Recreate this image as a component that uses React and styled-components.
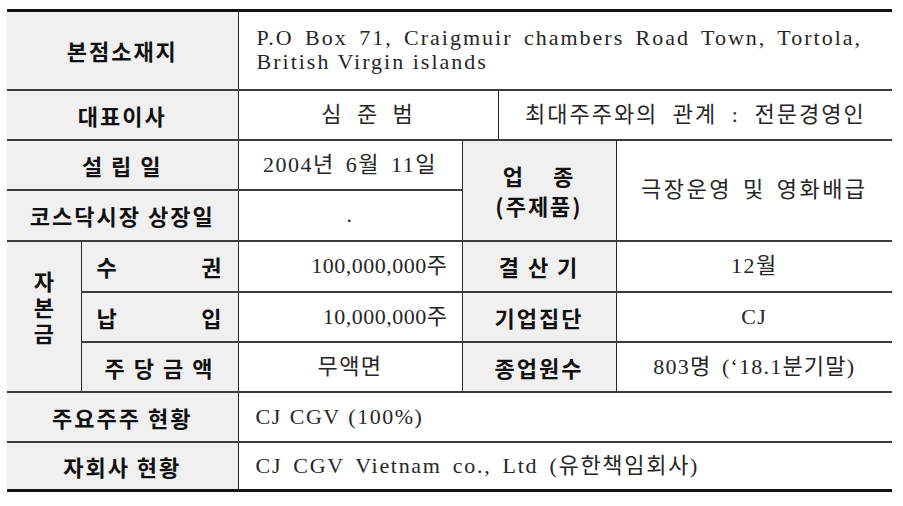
import React from 'react';
import styled, { createGlobalStyle } from 'styled-components';

const GlobalStyle = createGlobalStyle`
  html, body {
    margin: 0;
    background: #fff;
  }
`;

const Page = styled.div`
  padding: 9px 11px 0 7px;
`;

const Sheet = styled.table`
  width: 885px;
  table-layout: fixed;
  border-collapse: collapse;
  border-top: 3px solid #111;
  border-bottom: 3px solid #111;
`;

const Row = styled.tr`
  height: ${props => props.$height || 50}px;
`;

const cell = `
  border-top: 2px solid #3c3c3c;
  border-left: 1px solid #2a2a2a;
  padding: 0;
  vertical-align: middle;
`;

const Label = styled.th`
  ${cell}
  ${props => props.$edge && 'border-left: none;'}
  background: #f0f0f0;
  color: #111;
  font-family: "Noto Sans CJK KR", "Noto Sans", sans-serif;
  font-weight: 700;
  font-size: 22px;
  letter-spacing: 2px;
  line-height: ${props => props.$lines || 28}px;
  text-align: center;
  white-space: nowrap;
`;

const Stack = styled.div`
  display: flex;
  flex-direction: column;
  align-items: center;
  line-height: 26px;
  padding-bottom: 20px;
  letter-spacing: 0;
`;

const Spread = styled.div`
  display: flex;
  justify-content: space-between;
  padding: 0 16px 0 15px;
  letter-spacing: 0;
`;

const Value = styled.td`
  ${cell}
  color: #262626;
  font-family: "Liberation Serif", "Noto Sans CJK KR", serif;
  font-weight: 400;
  font-size: 22px;
  letter-spacing: ${props => props.$spacing ?? 1.5}px;
  word-spacing: ${props => props.$words ?? 4}px;
  line-height: 24px;
  text-align: ${props => props.$align || 'center'};
  padding: ${props => props.$pad || '0'};
  white-space: nowrap;
`;

const JustifiedLine = styled.div`
  text-align: justify;
  text-align-last: justify;
`;

const PlainLine = styled.div`
  text-align: left;
`;

const Gap = styled.span`
  display: inline-block;
  width: ${props => props.$w}px;
`;

export default function App() {
  return (
    <Page>
      <GlobalStyle />
      <Sheet>
        <colgroup>
          <col style={{ width: 74 }} />
          <col style={{ width: 157 }} />
          <col style={{ width: 224 }} />
          <col style={{ width: 36 }} />
          <col style={{ width: 118 }} />
          <col style={{ width: 276 }} />
        </colgroup>
        <tbody>
          <Row $height={79}>
            <Label colSpan={2} $edge>본점소재지</Label>
            <Value colSpan={4} $spacing={2} $words={0} $pad="0 30px 0 18px">
              <JustifiedLine>P.O Box 71, Craigmuir chambers Road Town, Tortola,</JustifiedLine>
              <PlainLine>British Virgin islands</PlainLine>
            </Value>
          </Row>
          <Row>
            <Label colSpan={2} $edge>대표이사</Label>
            <Value colSpan={2} $spacing={2} $words={6}>심 준 범</Value>
            <Value colSpan={2} $spacing={2} $words={7}>최대주주와의 관계 : 전문경영인</Value>
          </Row>
          <Row>
            <Label colSpan={2} $edge>설 립 일</Label>
            <Value>2004년 6월 11일</Value>
            <Label colSpan={2} rowSpan={2} $lines={30}>
              업<Gap $w={28} />종<br />(주제품)
            </Label>
            <Value rowSpan={2} $spacing={2.5} $words={3}>극장운영 및 영화배급</Value>
          </Row>
          <Row $height={51}>
            <Label colSpan={2} $edge>코스닥시장 상장일</Label>
            <Value>.</Value>
          </Row>
          <Row $height={51}>
            <Label rowSpan={3} $edge>
              <Stack>
                <span>자</span>
                <span>본</span>
                <span>금</span>
              </Stack>
            </Label>
            <Label>
              <Spread><span>수</span><span>권</span></Spread>
            </Label>
            <Value $align="right" $spacing={0.5} $pad="0 14px 0 0">100,000,000주</Value>
            <Label colSpan={2}>결 산 기</Label>
            <Value>12월</Value>
          </Row>
          <Row>
            <Label>
              <Spread><span>납</span><span>입</span></Spread>
            </Label>
            <Value $align="right" $spacing={0.5} $pad="0 14px 0 0">10,000,000주</Value>
            <Label colSpan={2}>기업집단</Label>
            <Value>CJ</Value>
          </Row>
          <Row>
            <Label>주 당 금 액</Label>
            <Value>무액면</Value>
            <Label colSpan={2}>종업원수</Label>
            <Value $spacing={1.2}>803명 (‘18.1분기말)</Value>
          </Row>
          <Row>
            <Label colSpan={2} $edge>주요주주 현황</Label>
            <Value colSpan={4} $align="left" $words={1} $pad="0 0 0 17px">CJ CGV (100%)</Value>
          </Row>
          <Row $height={49}>
            <Label colSpan={2} $edge>자회사 현황</Label>
            <Value colSpan={4} $align="left" $spacing={1.7} $pad="0 0 0 17px">CJ CGV Vietnam co., Ltd (유한책임회사)</Value>
          </Row>
        </tbody>
      </Sheet>
    </Page>
  );
}
